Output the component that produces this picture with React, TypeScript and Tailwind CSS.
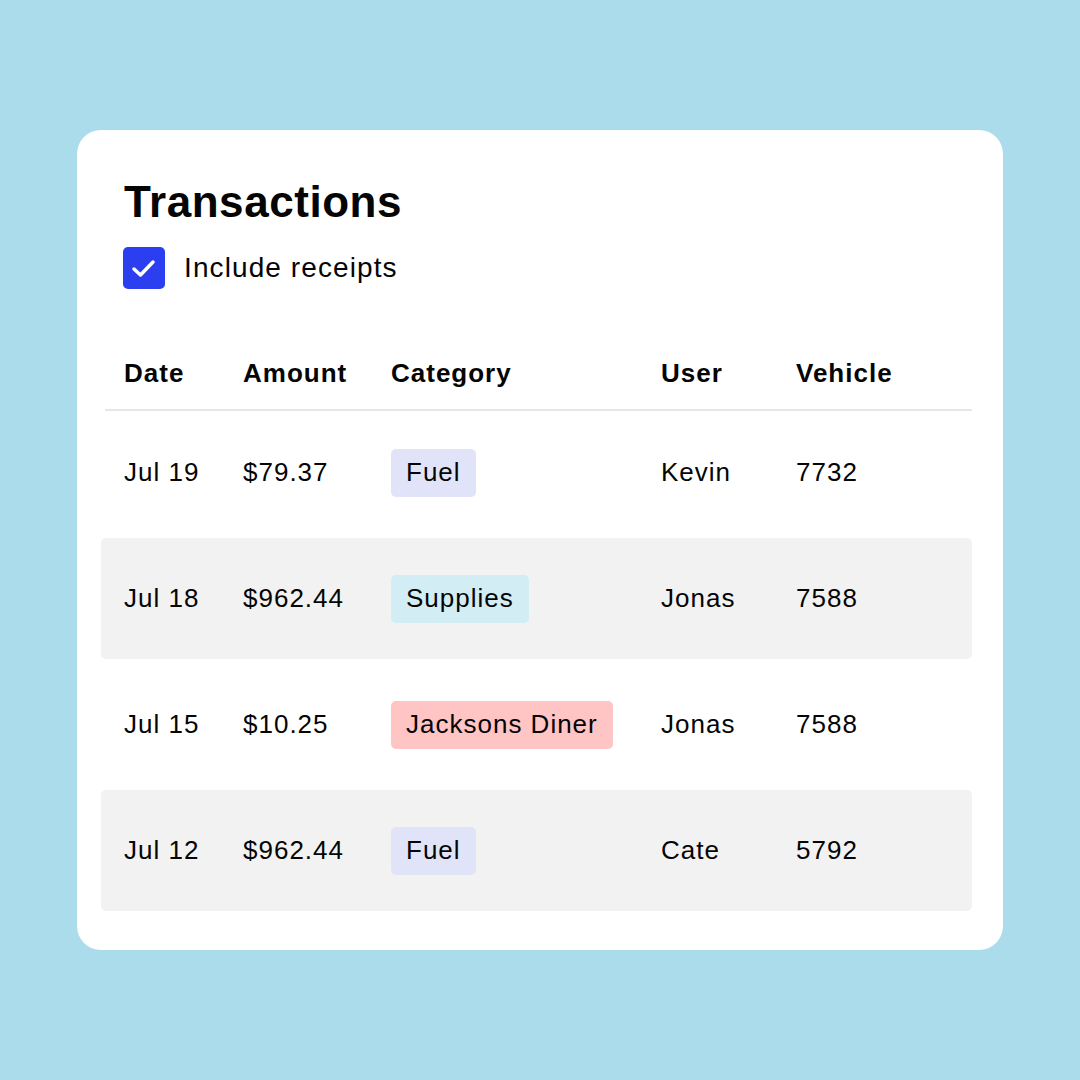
import React from "react";

type Row = { date: string; amount: string; cat: string; catBg: string; user: string; vehicle: string; gray: boolean };

const rows: Row[] = [
  { date: "Jul 19", amount: "$79.37", cat: "Fuel", catBg: "bg-[#e1e4f8]", user: "Kevin", vehicle: "7732", gray: false },
  { date: "Jul 18", amount: "$962.44", cat: "Supplies", catBg: "bg-[#d3edf5]", user: "Jonas", vehicle: "7588", gray: true },
  { date: "Jul 15", amount: "$10.25", cat: "Jacksons Diner", catBg: "bg-[#ffc4c4]", user: "Jonas", vehicle: "7588", gray: false },
  { date: "Jul 12", amount: "$962.44", cat: "Fuel", catBg: "bg-[#e1e4f8]", user: "Cate", vehicle: "5792", gray: true },
];

export default function App() {
  return (
    <div
      className="w-[1080px] h-[1080px] bg-[#abdcec] flex flex-col items-start pt-[130px] pl-[77px] text-[#050505]"
      style={{ fontFamily: '"Liberation Sans", Arial, sans-serif' }}
    >
      <div className="w-[926px] h-[820px] bg-white rounded-[24px] pt-[50px] pl-[24px] pr-[31px] flex flex-col">
        <h1 className="ml-[23px] text-[44px] leading-[44px] font-bold tracking-[0.55px]">Transactions</h1>
        <div className="ml-[22px] mt-[23px] flex items-center gap-[19px]">
          <div className="w-[42px] h-[42px] rounded-[5px] bg-[#2b3ef0] flex items-center justify-center">
            <svg width="42" height="42" viewBox="0 0 42 42">
              <polyline points="11,22 17.5,28 30,15" fill="none" stroke="white" strokeWidth="3.5" strokeLinecap="round" strokeLinejoin="round" />
            </svg>
          </div>
          <span className="text-[28px] leading-[42px] tracking-[1.1px]">Include receipts</span>
        </div>
        <div className="mt-[44px] h-[76px] pt-[4px] flex items-center pl-[23px] text-[26px] font-bold tracking-[1px]">
          <div className="w-[119px]">Date</div>
          <div className="w-[148px]">Amount</div>
          <div className="w-[270px]">Category</div>
          <div className="w-[135px]">User</div>
          <div>Vehicle</div>
        </div>
        <div className="h-[2px] bg-[#e6e6e6] ml-[4px]" />
        <div className="flex flex-col gap-[5px] mt-[1px]">
          {rows.map((r, i) => (
            <div
              key={i}
              className={`h-[121px] flex items-center pl-[23px] rounded-[5px] text-[26px] tracking-[1px] ${r.gray ? "bg-[#f2f2f2]" : "bg-white"}`}
            >
              <div className="w-[119px]">{r.date}</div>
              <div className="w-[148px]">{r.amount}</div>
              <div className="w-[270px]">
                <span className={`inline-flex items-center h-[48px] px-[15px] rounded-[5px] ${r.catBg}`}>{r.cat}</span>
              </div>
              <div className="w-[135px]">{r.user}</div>
              <div>{r.vehicle}</div>
            </div>
          ))}
        </div>
      </div>
    </div>
  );
}
